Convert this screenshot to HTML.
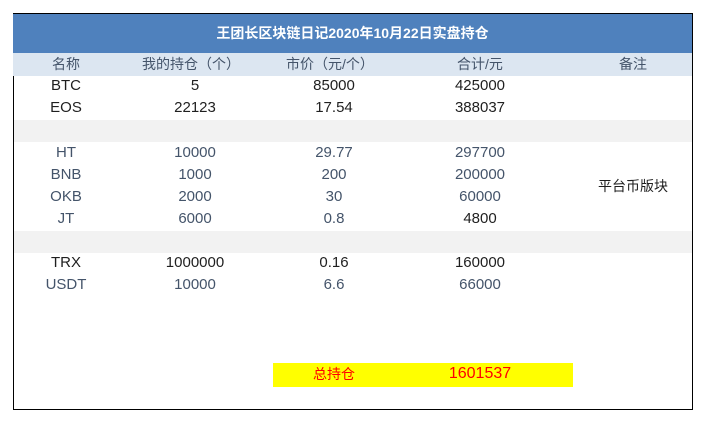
<!DOCTYPE html><html><head><meta charset="utf-8"><style>
body{margin:0;width:707px;height:421px;background:#fff;position:relative;font-family:"Liberation Sans","Noto Sans CJK SC",sans-serif;font-size:15px;overflow:hidden}
.f{position:absolute;left:13px;top:13px;width:678px;height:395px;border:1px solid #000;box-sizing:content-box}
.a{position:absolute}
.t{position:absolute;text-align:center;width:120px;margin-left:-60px;line-height:22px;color:#1f1f1f}
.b{color:#44546a}
</style></head><body>
<div class="f"></div>
<div class="a" style="left:13px;top:14px;width:679px;height:39px;background:#4f81bd;color:#fff;font-weight:bold;text-align:center;line-height:39px;font-size:14px">王团长区块链日记2020年10月22日实盘持仓</div>
<div class="a" style="left:13px;top:53px;width:679px;height:23px;background:#dce6f1"></div>
<div class="a" style="left:14px;top:120px;width:678px;height:22px;background:#f2f2f2"></div>
<div class="a" style="left:14px;top:231px;width:678px;height:22px;background:#f2f2f2"></div>
<div class="a" style="left:273px;top:363px;width:300px;height:24px;background:#ff0"></div>
<div class="t b" style="left:66px;top:53px;font-size:14px">名称</div><div class="t b" style="left:191px;top:53px;font-size:14px">我的持仓（个）</div><div class="t b" style="left:330px;top:53px;font-size:14px">市价（元/个）</div><div class="t b" style="left:480px;top:53px;font-size:14px">合计/元</div><div class="t b" style="left:633px;top:53px;font-size:14px">备注</div>
<div class="t" style="left:66px;top:75px">BTC</div><div class="t" style="left:195px;top:75px">5</div><div class="t" style="left:334px;top:75px">85000</div><div class="t" style="left:480px;top:75px">425000</div>
<div class="t" style="left:66px;top:97px">EOS</div><div class="t" style="left:195px;top:97px">22123</div><div class="t" style="left:334px;top:97px">17.54</div><div class="t" style="left:480px;top:97px">388037</div>
<div class="t b" style="left:66px;top:142px">HT</div><div class="t b" style="left:195px;top:142px">10000</div><div class="t b" style="left:334px;top:142px">29.77</div><div class="t b" style="left:480px;top:142px">297700</div>
<div class="t b" style="left:66px;top:164px">BNB</div><div class="t b" style="left:195px;top:164px">1000</div><div class="t b" style="left:334px;top:164px">200</div><div class="t b" style="left:480px;top:164px">200000</div>
<div class="t b" style="left:66px;top:186px">OKB</div><div class="t b" style="left:195px;top:186px">2000</div><div class="t b" style="left:334px;top:186px">30</div><div class="t b" style="left:480px;top:186px">60000</div>
<div class="t b" style="left:66px;top:208px">JT</div><div class="t b" style="left:195px;top:208px">6000</div><div class="t b" style="left:334px;top:208px">0.8</div><div class="t" style="left:480px;top:208px">4800</div>
<div class="t" style="left:633px;top:175px;font-size:14px">平台币版块</div>
<div class="t" style="left:66px;top:252px">TRX</div><div class="t" style="left:195px;top:252px">1000000</div><div class="t" style="left:334px;top:252px">0.16</div><div class="t" style="left:480px;top:252px">160000</div>
<div class="t b" style="left:66px;top:274px">USDT</div><div class="t b" style="left:195px;top:274px">10000</div><div class="t b" style="left:334px;top:274px">6.6</div><div class="t b" style="left:480px;top:274px">66000</div>
<div class="t" style="left:334px;top:363px;color:#f00;font-size:14px">总持仓</div><div class="t" style="left:480px;top:363px;color:#f00;font-size:16px">1601537</div>
</body></html>
